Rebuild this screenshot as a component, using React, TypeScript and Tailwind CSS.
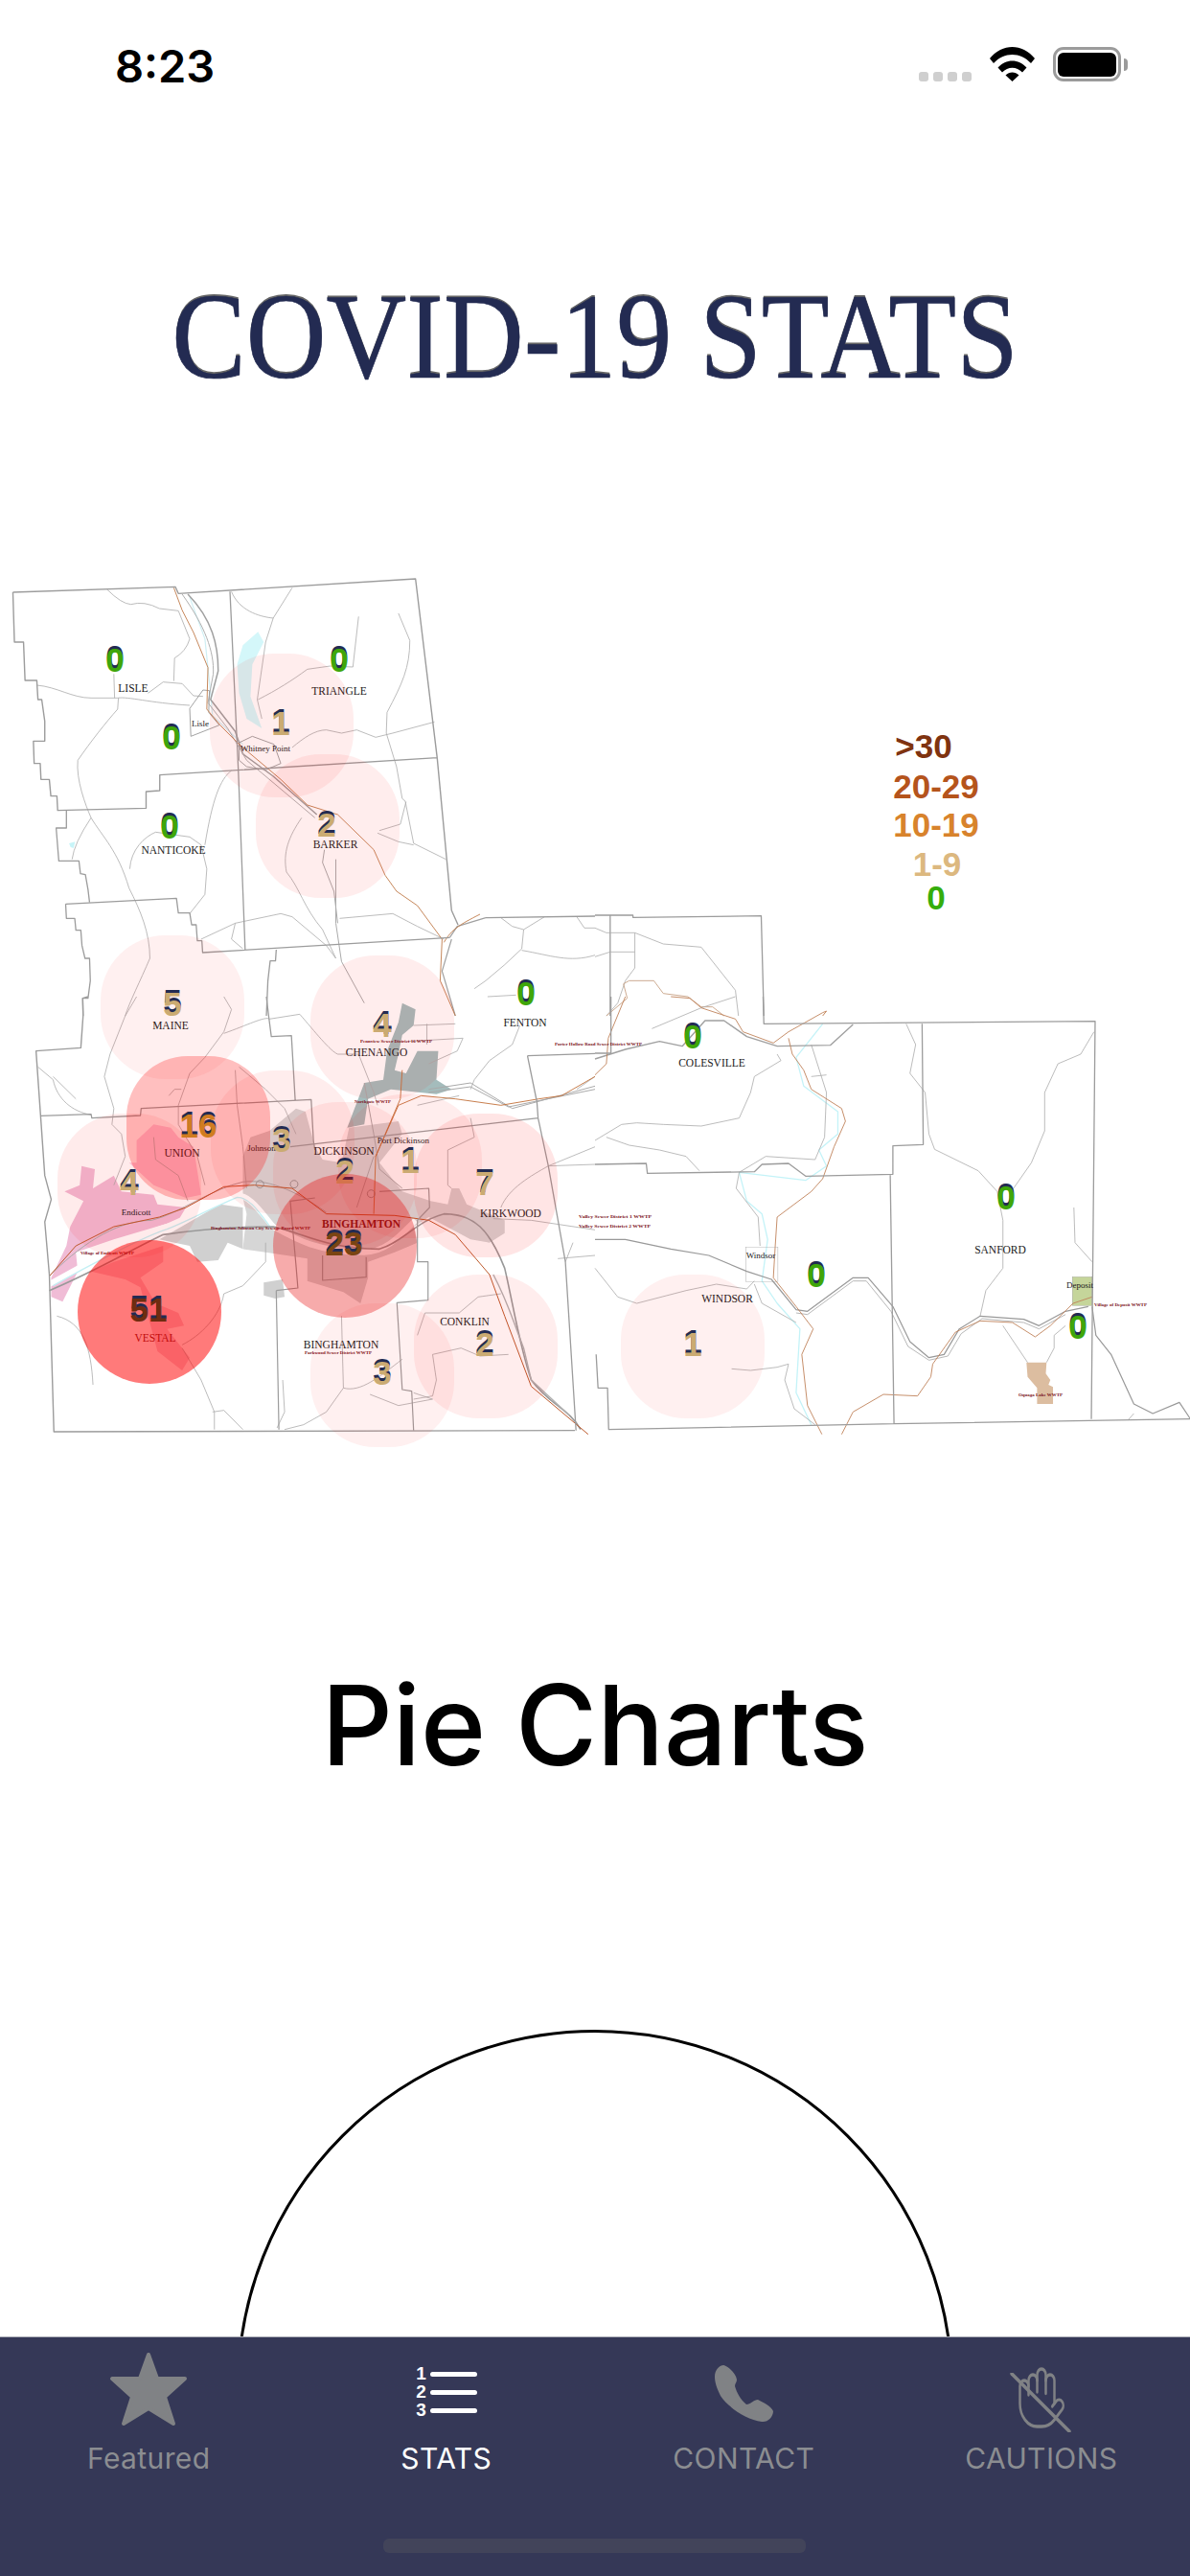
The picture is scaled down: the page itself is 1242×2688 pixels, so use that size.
import React from 'react';
import { Hand } from 'lucide-react';

// zoom-space scale: map was traced with x 2.525x and y 3x
const SX = 621 / 1568;
const SY = 1 / 3;

const bubbles = [
  'left-[219px] top-[102px] rounded-[68px] bg-[#ff0000]/[0.07]',
  'left-[267px] top-[207px] rounded-[68px] bg-[#ff0000]/[0.07]',
  'left-[105px] top-[396px] rounded-[68px] bg-[#ff0000]/[0.06]',
  'left-[324px] top-[417px] rounded-[68px] bg-[#ff0000]/[0.07]',
  'left-[220px] top-[537px] rounded-[68px] bg-[#ff0000]/[0.07]',
  'left-[60px] top-[582px] rounded-[68px] bg-[#ff0000]/[0.08]',
  'left-[285px] top-[570px] rounded-[68px] bg-[#ff0000]/[0.07]',
  'left-[353px] top-[562px] rounded-[68px] bg-[#ff0000]/[0.07]',
  'left-[432px] top-[582px] rounded-[68px] bg-[#ff0000]/[0.1]',
  'left-[324px] top-[780px] rounded-[68px] bg-[#ff0000]/[0.06]',
  'left-[432px] top-[750px] rounded-[68px] bg-[#ff0000]/[0.07]',
  'left-[648px] top-[750px] rounded-[68px] bg-[#ff0000]/[0.06]',
  'left-[132px] top-[522px] rounded-[64px] bg-[#ff0000]/[0.25]',
];

const pins = [
  { n: '0', c: 'left-[120px] top-[109px] text-[#3fa60a]' },
  { n: '0', c: 'left-[179px] top-[190px] text-[#3fa60a]' },
  { n: '0', c: 'left-[177px] top-[283px] text-[#3fa60a]' },
  { n: '0', c: 'left-[354px] top-[109px] text-[#3fa60a]' },
  { n: '1', c: 'left-[293px] top-[175px] text-[#cbab72]' },
  { n: '2', c: 'left-[341px] top-[281px] text-[#cbab72]' },
  { n: '5', c: 'left-[180px] top-[468px] text-[#cbab72]' },
  { n: '0', c: 'left-[549px] top-[457px] text-[#3fa60a]' },
  { n: '4', c: 'left-[399px] top-[490px] text-[#cbab72]' },
  { n: '16', c: 'left-[207px] top-[595px] text-[#d07c20]' },
  { n: '3', c: 'left-[294px] top-[610px] text-[#cbab72]' },
  { n: '4', c: 'left-[135px] top-[655px] text-[#cbab72]' },
  { n: '2', c: 'left-[360px] top-[643px] text-[#cbab72]' },
  { n: '1', c: 'left-[428px] top-[632px] text-[#cbab72]' },
  { n: '7', c: 'left-[506px] top-[655px] text-[#cbab72]' },
  { n: '3', c: 'left-[399px] top-[853px] text-[#cbab72]' },
  { n: '2', c: 'left-[506px] top-[823px] text-[#cbab72]' },
  { n: '0', c: 'left-[723px] top-[502px] text-[#3fa60a]' },
  { n: '0', c: 'left-[1050px] top-[670px] text-[#3fa60a]' },
  { n: '0', c: 'left-[852px] top-[751px] text-[#3fa60a]' },
  { n: '0', c: 'left-[1125px] top-[805px] text-[#3fa60a]' },
  { n: '1', c: 'left-[723px] top-[823px] text-[#cbab72]' },
];

const legend = [
  { t: '>30', c: 'left-[964px] top-[198px] text-[#7f3310]' },
  { t: '20-29', c: 'left-[977px] top-[240px] text-[#b5541c]' },
  { t: '10-19', c: 'left-[977px] top-[280px] text-[#d8832c]' },
  { t: '1-9', c: 'left-[978px] top-[321px] text-[#dcb87f]' },
  { t: '0', c: 'left-[977px] top-[356px] text-[#35ad0c]' },
];

const towns: [string, number, number][] = [
  ['LISLE', 139, 142], ['TRIANGLE', 354, 145], ['BARKER', 350, 305], ['NANTICOKE', 181, 311],
  ['MAINE', 178, 494], ['CHENANGO', 393, 522], ['FENTON', 548, 491], ['UNION', 190, 627],
  ['DICKINSON', 359, 625], ['KIRKWOOD', 533, 690], ['CONKLIN', 485, 803], ['BINGHAMTON', 356, 827],
  ['COLESVILLE', 743, 533], ['WINDSOR', 759, 779], ['SANFORD', 1044, 728],
];

const villages: [string, number, number][] = [
  ['Lisle', 209, 178], ['Whitney Point', 277, 204], ['Johnson', 273, 621], ['Port Dickinson', 421, 613],
  ['Endicott', 142, 688], ['Windsor', 794, 733], ['Deposit', 1127, 764],
];

const plants: [string, number, number, number][] = [
  ['Pennview Sewer District 16 WWTP', 376, 508, 75],
  ['Northgate WWTP', 370, 571, 38],
  ['Binghamton-Johnson City Sewage Board WWTP', 220, 703, 104],
  ['Village of Endicott WWTP', 84, 729, 56],
  ['Parkwood Sewer District WWTP', 318, 833, 70],
  ['Porter Hollow Road Sewer District WWTP', 579, 511, 91],
  ['Valley Sewer District 1 WWTP', 604, 691, 76],
  ['Valley Sewer District 2 WWTP', 604, 701, 75],
  ['Village of Deposit WWTP', 1142, 783, 55],
  ['Oquaga Lake WWTP', 1063, 877, 46],
];

const Line = ({ d, s = '#ababab', w = 0.8 }: { d: string; s?: string; w?: number }) => (
  <path d={d} fill="none" stroke={s} strokeWidth={w} strokeLinejoin="round" />
);

const CountyMap = () => (
  <svg
    viewBox="0 0 1242 940"
    className="absolute inset-0 h-[940px] w-[1242px] [&_path]:[vector-effect:non-scaling-stroke]"
  >
    {/* north half */}
    <g transform={`scale(${SX} ${SY})`}>
      <path d="M640 280L680 238L695 270L665 340L660 440L690 540L650 510L630 430L625 340Z" fill="#d4f7fa" />
      <path d="M182 900L198 895L194 915L186 912Z" fill="#c8f4f8" />
      <Line d="M500 130L540 260L555 430L560 500L640 590" s="#cfeff4" w={1.2} />
      <Line d="M610 112C630 170 680 190 720 195L770 100M720 195L700 270L678 450L690 510" />
      <Line d="M282 105Q320 150 345 152Q380 140 420 165L470 172L500 260Q490 300 460 320L458 392" />
      <Line d="M97 405C150 410 190 445 240 445L310 445C340 440 390 460 500 468M300 370L302 445" />
      <Line d="M312 445L310 480C280 520 240 580 205 640C200 700 225 780 240 820C270 880 310 920 340 1040C370 1110 395 1180 395 1260C370 1330 340 1400 330 1440" />
      <Line d="M390 430L430 395L480 400L510 438L535 440M240 820Q195 900 190 950" />
      <Line d="M342 980C345 920 380 880 410 865L500 880L530 905L545 980L540 1060L500 1120M540 905C560 760 580 700 610 672" />
      <Line d="M680 450C730 420 770 390 810 355L870 345L930 348L945 190" />
      <Line d="M1050 180L1080 265C1080 350 1060 400 1020 490L1018 555L1045 660L1060 760L1068 768L1090 900L1175 950" />
      <Line d="M770 600C800 570 830 545 860 545L900 555L940 545L990 568L1035 555L1145 520" />
      <Line d="M1000 860L1055 840L1070 770M995 868L1050 895L1090 905" />
      <Line d="M795 820C760 880 745 930 755 990C790 1040 800 1100 850 1170L885 1260" />
      <Line d="M895 1135L1035 1120L1100 1160L1170 1200M620 1150L740 1120L770 1130L860 1220L885 1260M530 1200L620 1150L610 1200L640 1230" />
      <Line d="M1250 1355L1280 1330L1330 1280L1375 1230L1380 1170L1350 1160L1320 1133M1375 1235C1450 1250 1500 1275 1568 1250M1285 1380L1360 1375M1435 1130L1380 1170M1520 1130L1540 1165L1568 1165" />
      <Line d="M495 120C560 200 575 280 575 360L555 450L620 550L640 620L720 690L835 810" s="#a0a0a0" w={1.5} />
      <Line d="M480 120C540 220 565 300 562 370L548 460L600 540L650 640L690 680L830 820" s="#b0b0b0" w={1} />
      <Line d="M885 950L885 1150L900 1270L960 1400M855 920L850 960L880 1050L890 1150" s="#aaa" w={1} />
      <Line d="M1185 1195L1205 1160L1280 1133M1190 1200L1165 1300L1200 1440" s="#a0a0a0" w={1.2} />
      <Line d="M630 585L665 565L722 590L740 650L700 670L650 660L630 640ZM500 478L535 420L552 422L550 490L578 530L503 565Z" s="#999" w={0.9} />
      <Line d="M458 100L480 170L510 240L548 350L545 480L580 530L630 590L740 700L810 780L890 810L985 920L1015 1000L1045 1050L1100 1095L1165 1200L1160 1330L1200 1440M1170 1210C1190 1170 1210 1155 1265 1122" s="#c07a4a" w={0.9} />
      <Line d="M34 114L462 97L470 118L1095 72L1152 632L1190 1110L1207 1155M34 114L38 270L62 270L66 390L97 390L100 450L110 450L118 518L118 580L88 580L90 650L106 650L108 700L130 700L134 752L150 752L152 797L385 790L385 738L421 735L421 686L1152 632" s="#9c9c9c" w={1.4} />
      <Line d="M606 112L628 670L646 1233M175 797L175 852L148 852L155 955L208 955L212 995L225 998L232 1045L236 1085" s="#9c9c9c" w={1.3} />
      <Line d="M173 1090L465 1072L470 1118L500 1118L505 1155L517 1155L520 1205L532 1205L534 1242L1185 1195M173 1090L175 1135L197 1135L200 1172L213 1172L216 1220L224 1260L236 1260L238 1330L232 1385L218 1385L219 1440M728 1233L726 1268L712 1268L706 1330L702 1440" s="#9c9c9c" w={1.3} />
      <Line d="M1280 1133L1568 1128" s="#9c9c9c" w={1.3} />
    </g>

    {/* north east, above the legend's foot */}
    <g transform={`translate(621 0) scale(${SX} ${SY})`}>
      <Line d="M0 1125L100 1125L100 1132L438 1127L445 1440M40 1125L40 1440" s="#9c9c9c" w={1.3} />
      <Line d="M0 1165L30 1180L105 1180L180 1215L280 1225L370 1360L378 1440M0 1255L40 1240L105 1240M105 1180L105 1290L80 1330L60 1400L30 1440" />
      <Line d="M30 1440L85 1385L75 1340L90 1330L155 1330L180 1370L245 1380L280 1412L310 1412L340 1440" s="#c7a285" w={0.9} />
      <Line d="M600 1440L610 1425" s="#c07a4a" w={0.9} />
    </g>

    {/* south west, the urban valley */}
    <g transform={`translate(0 460) scale(${SX} ${SY})`}>
      <path d="M215 530L250 540L245 600L300 560L320 610L405 620L415 650L490 660L470 700L300 760L200 800L205 860L165 955L135 940L135 880L175 780L185 720L220 640L170 610L210 590Z" fill="#f0bcd6" />
      <path d="M360 450L405 400L450 410L470 440L510 470L530 620L490 630L405 590L340 520L360 520Z" fill="#fbd0e4" />
      <path d="M240 860L300 830L430 780L430 830L370 880L410 960L470 990L485 1030L440 1040L500 1130L480 1170L415 1110L370 910L330 885Z" fill="#f4ccd8" />
      <path d="M640 500L660 440L710 420L780 350L805 360L830 470L850 510L900 520L920 410L1050 390L1060 430L1000 520L1060 610L1135 640L1180 650L1190 600L1210 600L1230 650L1330 700L1330 740L1290 770L1240 760L1130 690L1090 720L1100 770L1040 800L970 830L970 880L950 960L905 925L810 890L810 820L700 800L640 790L650 680L640 630Z" fill="#d6d6d6" />
      <path d="M420 760L580 650L640 660L640 790L600 770L575 825L520 830L500 780L460 770Z" fill="#d0d0d0" />
      <path d="M695 895L745 885L750 940L725 945L695 935Z" fill="#d0d0d0" />
      <path d="M1060 20L1095 40L1090 90L1060 120L1050 180L1040 230L1070 240L1100 170L1155 170L1150 260L1190 290L1150 305L1030 290L970 320L960 400L915 410L960 270L1010 260L1020 170L1050 80Z" fill="#a4bcbc" />
      <path d="M130 900C220 840 380 740 440 720C500 690 560 650 620 620C660 620 690 680 720 720C780 760 840 800 960 800C1020 800 1060 740 1095 700" fill="none" stroke="#fff" strokeWidth="6" />
      <Line d="M140 905C220 850 380 750 440 728C500 700 560 660 625 628C660 628 685 680 715 725" s="#c4f0f4" w={1.4} />
      <Line d="M360 0L330 60L290 180L275 250L300 350L295 400L320 430L330 500L300 590M100 220L140 260C150 320 190 360 240 370M140 250L200 320" />
      <Line d="M590 110L610 40L590 0M590 110L540 190L500 240L470 340L470 400L520 500L540 590M590 115C650 90 700 60 710 70L790 55C830 110 870 170 890 180L945 180L985 300L995 340" />
      <Line d="M445 310L460 290L478 290M620 230L625 340L640 470L650 600M630 220L700 290L750 350L780 430M405 440L410 510L470 560L495 640" />
      <Line d="M150 1000C220 1020 240 1100 245 1215M480 1100L530 1200L565 1300L565 1355M480 1090C530 1060 580 1000 590 930L640 905L700 830L700 770" />
      <Line d="M900 1000L905 1225L860 1300L800 1340L750 1355M905 1225C950 1240 1000 1190 1060 1135M975 1245L1050 1280L1140 1260L1090 1240M745 1200L750 1300L730 1350M560 1300L590 1295L640 1355" />
      <Line d="M1100 1060L1120 990L1210 990L1260 940L1320 930M1140 1120L1215 1100L1265 1125L1340 1120M1140 1120L1150 1200L1140 1250L1090 1260" />
      <Line d="M1240 380L1250 440L1180 480L1180 590L1190 600M1100 340L1210 310M1090 90L1200 85M1125 85L1125 150M1075 140L1220 130L1205 170L1130 210" />
      <Line d="M1445 530L1568 525M1300 695L1400 700L1568 730M1320 660C1340 600 1400 560 1445 530L1568 470M1510 770L1490 830M1470 820L1568 810M1370 90L1350 150L1290 200L1250 260L1240 290M1520 290L1568 250" />
      <Line d="M130 920C250 860 350 790 430 745C520 730 600 720 720 720C800 740 860 790 1000 790C1060 770 1100 700 1170 680C1250 680 1290 730 1330 850C1350 950 1370 1100 1400 1200C1450 1280 1500 1290 1530 1355" s="#999" w={1.6} />
      <Line d="M130 875C200 790 300 700 400 700C470 680 560 600 640 580C700 570 770 600 860 675" s="#aaa" w={1} />
      <Line d="M960 270L985 430L1000 540L1060 600M940 660L985 500M1130 290L1240 270L1350 350L1568 280M1130 300L1240 282L1340 345L1568 290" s="#aaa" w={1} />
      <Line d="M1300 870C1340 960 1350 1010 1380 1100L1400 1200L1500 1310" s="#b0b0b0" w={1.4} />
      <Line d="M130 875L200 780L300 720L420 690L490 660L590 595L670 590L770 600L860 680L1040 685L1130 700L1200 745L1290 870L1330 1000L1400 1220L1520 1340L1550 1370" s="#bd5a2c" w={1} />
      <Line d="M985 680L990 500L1050 340L1110 310L1200 320L1320 340L1420 320L1480 310L1568 250M990 500L1055 320L1060 230" s="#c2703a" w={0.9} />
      <Line d="M685 575a10 12 0 1 0 .1 0M775 575a10 12 0 1 0 .1 0M978 605a10 12 0 1 0 .1 0" s="#888" w={0.8} />
      <Line d="M232 0L218 5L219 60L213 160L95 170L107 373L118 560L135 635L118 705L130 870L142 1362L1515 1358" s="#9c9c9c" w={1.4} />
      <Line d="M107 373L240 368L242 380L370 372L372 350L820 322L826 450L830 480M702 0L708 60L715 125L768 122L778 325" s="#9c9c9c" w={1.3} />
      <Line d="M765 470L1418 380M1390 185L1415 330L1418 380L1445 530L1490 830L1518 1358M1390 185L1568 178" s="#9c9c9c" w={1.3} />
      <Line d="M1000 610L1130 600L1132 660L1100 700L1100 830L1128 830L1128 950L1046 958L1060 1230L1085 1235L1090 1358M728 920L785 912L780 840L765 640L830 630M728 920L735 1355M850 810L850 888L965 878L965 815" s="#9c9c9c" w={1.2} />
    </g>

    {/* south east */}
    <g transform={`translate(621 460) scale(${SX} ${SY})`}>
      <rect x="1258" y="877" width="52" height="90" fill="#c5d59a" stroke="#999" strokeWidth="1" />
      <path d="M1137 1145L1190 1145L1188 1180L1200 1200L1195 1215L1207 1222L1207 1275L1165 1275L1165 1225L1140 1190Z" fill="#dcbda0" />
      <Line d="M600 85L530 190L550 280L640 360L640 430L590 480L610 530L555 575L380 550L400 640L440 680L455 760L440 890L480 960L540 1040L530 1240L570 1340" s="#c4f3f8" w={1.3} />
      <Line d="M150 100L280 35L370 0M570 150L610 300L605 440L580 510L450 500L380 550L372 600L430 690L435 780M570 250L610 245" />
      <Line d="M0 450L70 400L110 395L180 400L280 405L380 380L410 300L420 250L490 200L480 180M30 440L90 465L170 480L240 500L275 545" />
      <Line d="M820 85L845 150L830 240L870 300L880 430L895 478L1010 545L1060 610L1075 700L1075 850L1030 920L1015 1000" />
      <Line d="M1100 605L1150 520L1185 420L1185 300L1220 210L1280 180L1315 110M1262 660L1265 770L1310 830M1075 1030L1140 1145M1190 1145L1210 1100L1210 1060L1240 1030M1405 1325L1420 1305" />
      <Line d="M360 1165L410 1170L480 1160L510 1150L500 1200L525 1290L580 1340M0 850L60 940L110 960L240 920L320 900L400 915L420 890M420 900L440 960L530 1020" />
      <Line d="M0 195L80 165L170 140L230 155L290 75L340 75L400 125L480 155L620 152L680 87" s="#a0a0a0" w={1.4} />
      <Line d="M0 760L80 760L200 790L300 810L400 860L465 885L530 980L560 985L680 880L720 880L785 970L830 1080L880 1130L920 1120L960 1040L1015 1000L1130 1010L1170 1030L1240 985L1300 970" s="#999" w={1.2} />
      <Line d="M530 990L560 995L680 890L715 890L780 985L825 1095L880 1138L930 1125L965 1055L1020 1008L1130 1020L1170 1040L1240 995" s="#b0b0b0" w={0.9} />
      <Line d="M1310 970L1320 1060L1360 1120L1420 1275L1470 1305L1540 1270L1568 1320" s="#999" w={1.2} />
      <Line d="M0 245L30 210L35 130L80 0M200 0L250 5L280 35L370 70L390 110L470 145L510 110L600 50L610 45M510 130L520 180L550 230L570 290L650 350L660 390L630 470L600 570L570 610L480 690L475 780L470 880L530 970L575 1040L545 1120L560 1280L598 1370" s="#c0825a" w={0.9} />
      <Line d="M650 1370L680 1300L760 1245L850 1250L885 1190L890 1150L950 1050L1015 1015L1100 1020L1160 1065L1200 1030L1260 960L1310 940" s="#c0825a" w={0.9} />
      <Line d="M443 0L445 85L1318 77L1308 1322M0 525L135 522L138 553L420 548L440 525L510 522L555 562L785 556L785 467L865 463L862 85M778 558L788 1337M35 1355L788 1337L1568 1322M3 1120L8 1225L33 1225L36 1355M42 0L42 177L0 177" s="#9c9c9c" w={1.3} />
      <rect x="398" y="785" width="84" height="107" fill="none" stroke="#999" strokeWidth="1" />
    </g>

    <g className="font-['Liberation_Serif',serif]" textAnchor="middle" fill="#1a1a1a">
      {towns.map(([t, x, y]) => (
        <text key={t + x} x={x} y={y} fontSize="11.5">{t}</text>
      ))}
      {villages.map(([t, x, y]) => (
        <text key={t} x={x} y={y} fontSize="9">{t}</text>
      ))}
      <text x="377" y="701" fontSize="11.5" fontWeight="700" fill="#6b1a1a">BINGHAMTON</text>
      <text x="162" y="820" fontSize="11.5" fill="#7a1a20">VESTAL</text>
    </g>
    <g className="font-['Liberation_Serif',serif]" fontWeight="700" fill="#7a1020">
      {plants.map(([t, x, y, w]) => (
        <text key={t} x={x} y={y} fontSize="5" textLength={w} lengthAdjust="spacingAndGlyphs">{t}</text>
      ))}
    </g>
  </svg>
);

const Pin = ({ children, className }: { children: React.ReactNode; className: string }) => (
  <div className={`absolute -translate-x-1/2 -translate-y-1/2 font-['Liberation_Sans',sans-serif] text-[35px] font-bold leading-[26px] [text-shadow:0_-3px_0_#232b52] ${className}`}>
    {children}
  </div>
);

const CasesMap = () => (
  <div className="relative h-[940px] w-full">
    <CountyMap />
    {bubbles.map((c) => (
      <div key={c} className={`absolute h-[150px] w-[150px] ${c}`} />
    ))}
    {pins.map((p) => (
      <Pin key={p.c} className={p.c}>{p.n}</Pin>
    ))}
    <div className="absolute left-[285px] top-[645px] h-[150px] w-[150px] rounded-[75px] bg-[#e60000]/[0.33]" />
    <div className="absolute left-[81px] top-[714px] h-[150px] w-[150px] rounded-[75px] bg-[#ff0000]/[0.52]" />
    <Pin className="left-[359px] top-[718px] text-[#7a4412]">23</Pin>
    <Pin className="left-[155px] top-[787px] text-[#6f2c10]">51</Pin>
    {legend.map((l) => (
      <div key={l.t} className={`absolute -translate-x-1/2 -translate-y-1/2 font-['Liberation_Sans',sans-serif] text-[35px] font-bold leading-none ${l.c}`}>
        {l.t}
      </div>
    ))}
  </div>
);

const StatusBar = () => (
  <div className="flex h-[110px] items-start justify-between pl-[120px] pr-[65px] pt-[45px]">
    <span className="font-['Inter',sans-serif] text-[47px] font-semibold leading-[48px] text-black">8:23</span>
    <div className="flex items-start pt-[4px]">
      <div className="mr-[19px] mt-[26px] flex gap-[5px]">
        <span className="h-[10px] w-[10px] rounded-[3px] bg-[#cfcfcf]" />
        <span className="h-[10px] w-[10px] rounded-[3px] bg-[#cfcfcf]" />
        <span className="h-[10px] w-[10px] rounded-[3px] bg-[#cfcfcf]" />
        <span className="h-[10px] w-[10px] rounded-[3px] bg-[#cfcfcf]" />
      </div>
      <svg width="47" height="36" viewBox="0 0 47 36">
        <path d="M0 12C13 -4 34 -4 47 12L43 17C32 5 15 5 4 17Z" />
        <path d="M8.5 21.5C17 12 30 12 38.5 21.5L34 26.5C28 20 19 20 13 26.5Z" />
        <path d="M16.5 29.5C20.5 25.5 26.5 25.5 30.5 29.5L23.5 36Z" />
      </svg>
      <div className="ml-[19px] flex h-[36px] w-[71px] items-center justify-center rounded-[11px] border-[3px] border-[#9b9b9b]">
        <div className="h-[25px] w-[61px] rounded-[6px] bg-black" />
      </div>
      <div className="ml-[3px] mt-[12px] h-[13px] w-[4px] rounded-r-[4px] bg-[#9b9b9b]" />
    </div>
  </div>
);

const TabBar = () => (
  <nav className="grid h-[250px] shrink-0 grid-cols-4 border-t border-[#aaacb5] bg-[#353857] font-['Inter',sans-serif] text-[30px] leading-none tracking-[0.4px] text-[#8b8d91]">
    <div className="flex flex-col items-center">
      <div className="flex h-[111px] items-start pt-[15px]">
        <svg width="82" height="78" viewBox="0 0 82 78">
          <polygon points="41,3 50,28 79,28 58,47 67,75 41,59 15,75 24,47 3,28 32,28" fill="#808285" stroke="#808285" strokeWidth="4" strokeLinejoin="round" />
        </svg>
      </div>
      <span>Featured</span>
    </div>
    <div className="flex flex-col items-center text-white">
      <div className="flex h-[111px] items-start pt-[29px]">
        <div className="flex flex-col gap-[1px] font-['Liberation_Sans',sans-serif] text-[19px] font-bold leading-[18px]">
          <div className="flex items-center gap-[3px]"><span className="w-[13px] text-center">1</span><span className="h-[5px] w-[49px] rounded-full bg-white" /></div>
          <div className="flex items-center gap-[3px]"><span className="w-[13px] text-center">2</span><span className="h-[5px] w-[49px] rounded-full bg-white" /></div>
          <div className="flex items-center gap-[3px]"><span className="w-[13px] text-center">3</span><span className="h-[5px] w-[49px] rounded-full bg-white" /></div>
        </div>
      </div>
      <span>STATS</span>
    </div>
    <div className="flex flex-col items-center">
      <div className="flex h-[111px] items-start pt-[29px]">
        <svg width="61" height="60" viewBox="0 0 61 60">
          <path d="M9.5 0C15 2 22 9 23 15C23 18 21 19 21 22C23 29 27 36 33 41C37 41 41 36 45 36C51 39 59 43 61 48C61 54 55 60 49 59C33 57 14 44 6 32C2 24 0 18 0 12C0 6 4 0 9.5 0Z" fill="#808285" />
        </svg>
      </div>
      <span>CONTACT</span>
    </div>
    <div className="flex flex-col items-center">
      <div className="relative flex h-[111px] items-start pt-[27px]">
        <Hand width={54} height={72} strokeWidth={1.1} preserveAspectRatio="none" className="-scale-x-100 text-[#808285]" />
        <svg width="64" height="62" viewBox="0 0 64 62" className="absolute -left-[6px] top-[37px]">
          <path d="M2 1L62 61" stroke="#808285" strokeWidth="3.5" strokeLinecap="round" />
        </svg>
      </div>
      <span>CAUTIONS</span>
    </div>
    <div className="absolute bottom-[24px] left-[400px] h-[15px] w-[441px] rounded-[6px] bg-[#42445a]" />
  </nav>
);

export default function App() {
  return (
    <div className="relative flex h-[2688px] w-[1242px] flex-col overflow-hidden bg-white">
      <main className="min-h-0 flex-1 overflow-hidden">
        <StatusBar />
        <h1 className="mb-[165px] mt-[180px] h-[125px] scale-y-[1.09] text-center font-['Liberation_Serif',serif] text-[116px] font-normal leading-[125px] text-[#232b52] [-webkit-text-stroke:0.6px_#232b52] [text-shadow:0_-2px_0_#666]">
          COVID-19 STATS
        </h1>
        <CasesMap />
        <h2 className="mt-[220px] h-[120px] text-center font-['Inter',sans-serif] text-[116px] font-medium leading-[120px] text-black">
          Pie Charts
        </h2>
        <div className="mx-auto mt-[258px] h-[748px] w-[748px] rounded-full border-[3px] border-black bg-white" />
      </main>
      <TabBar />
    </div>
  );
}
